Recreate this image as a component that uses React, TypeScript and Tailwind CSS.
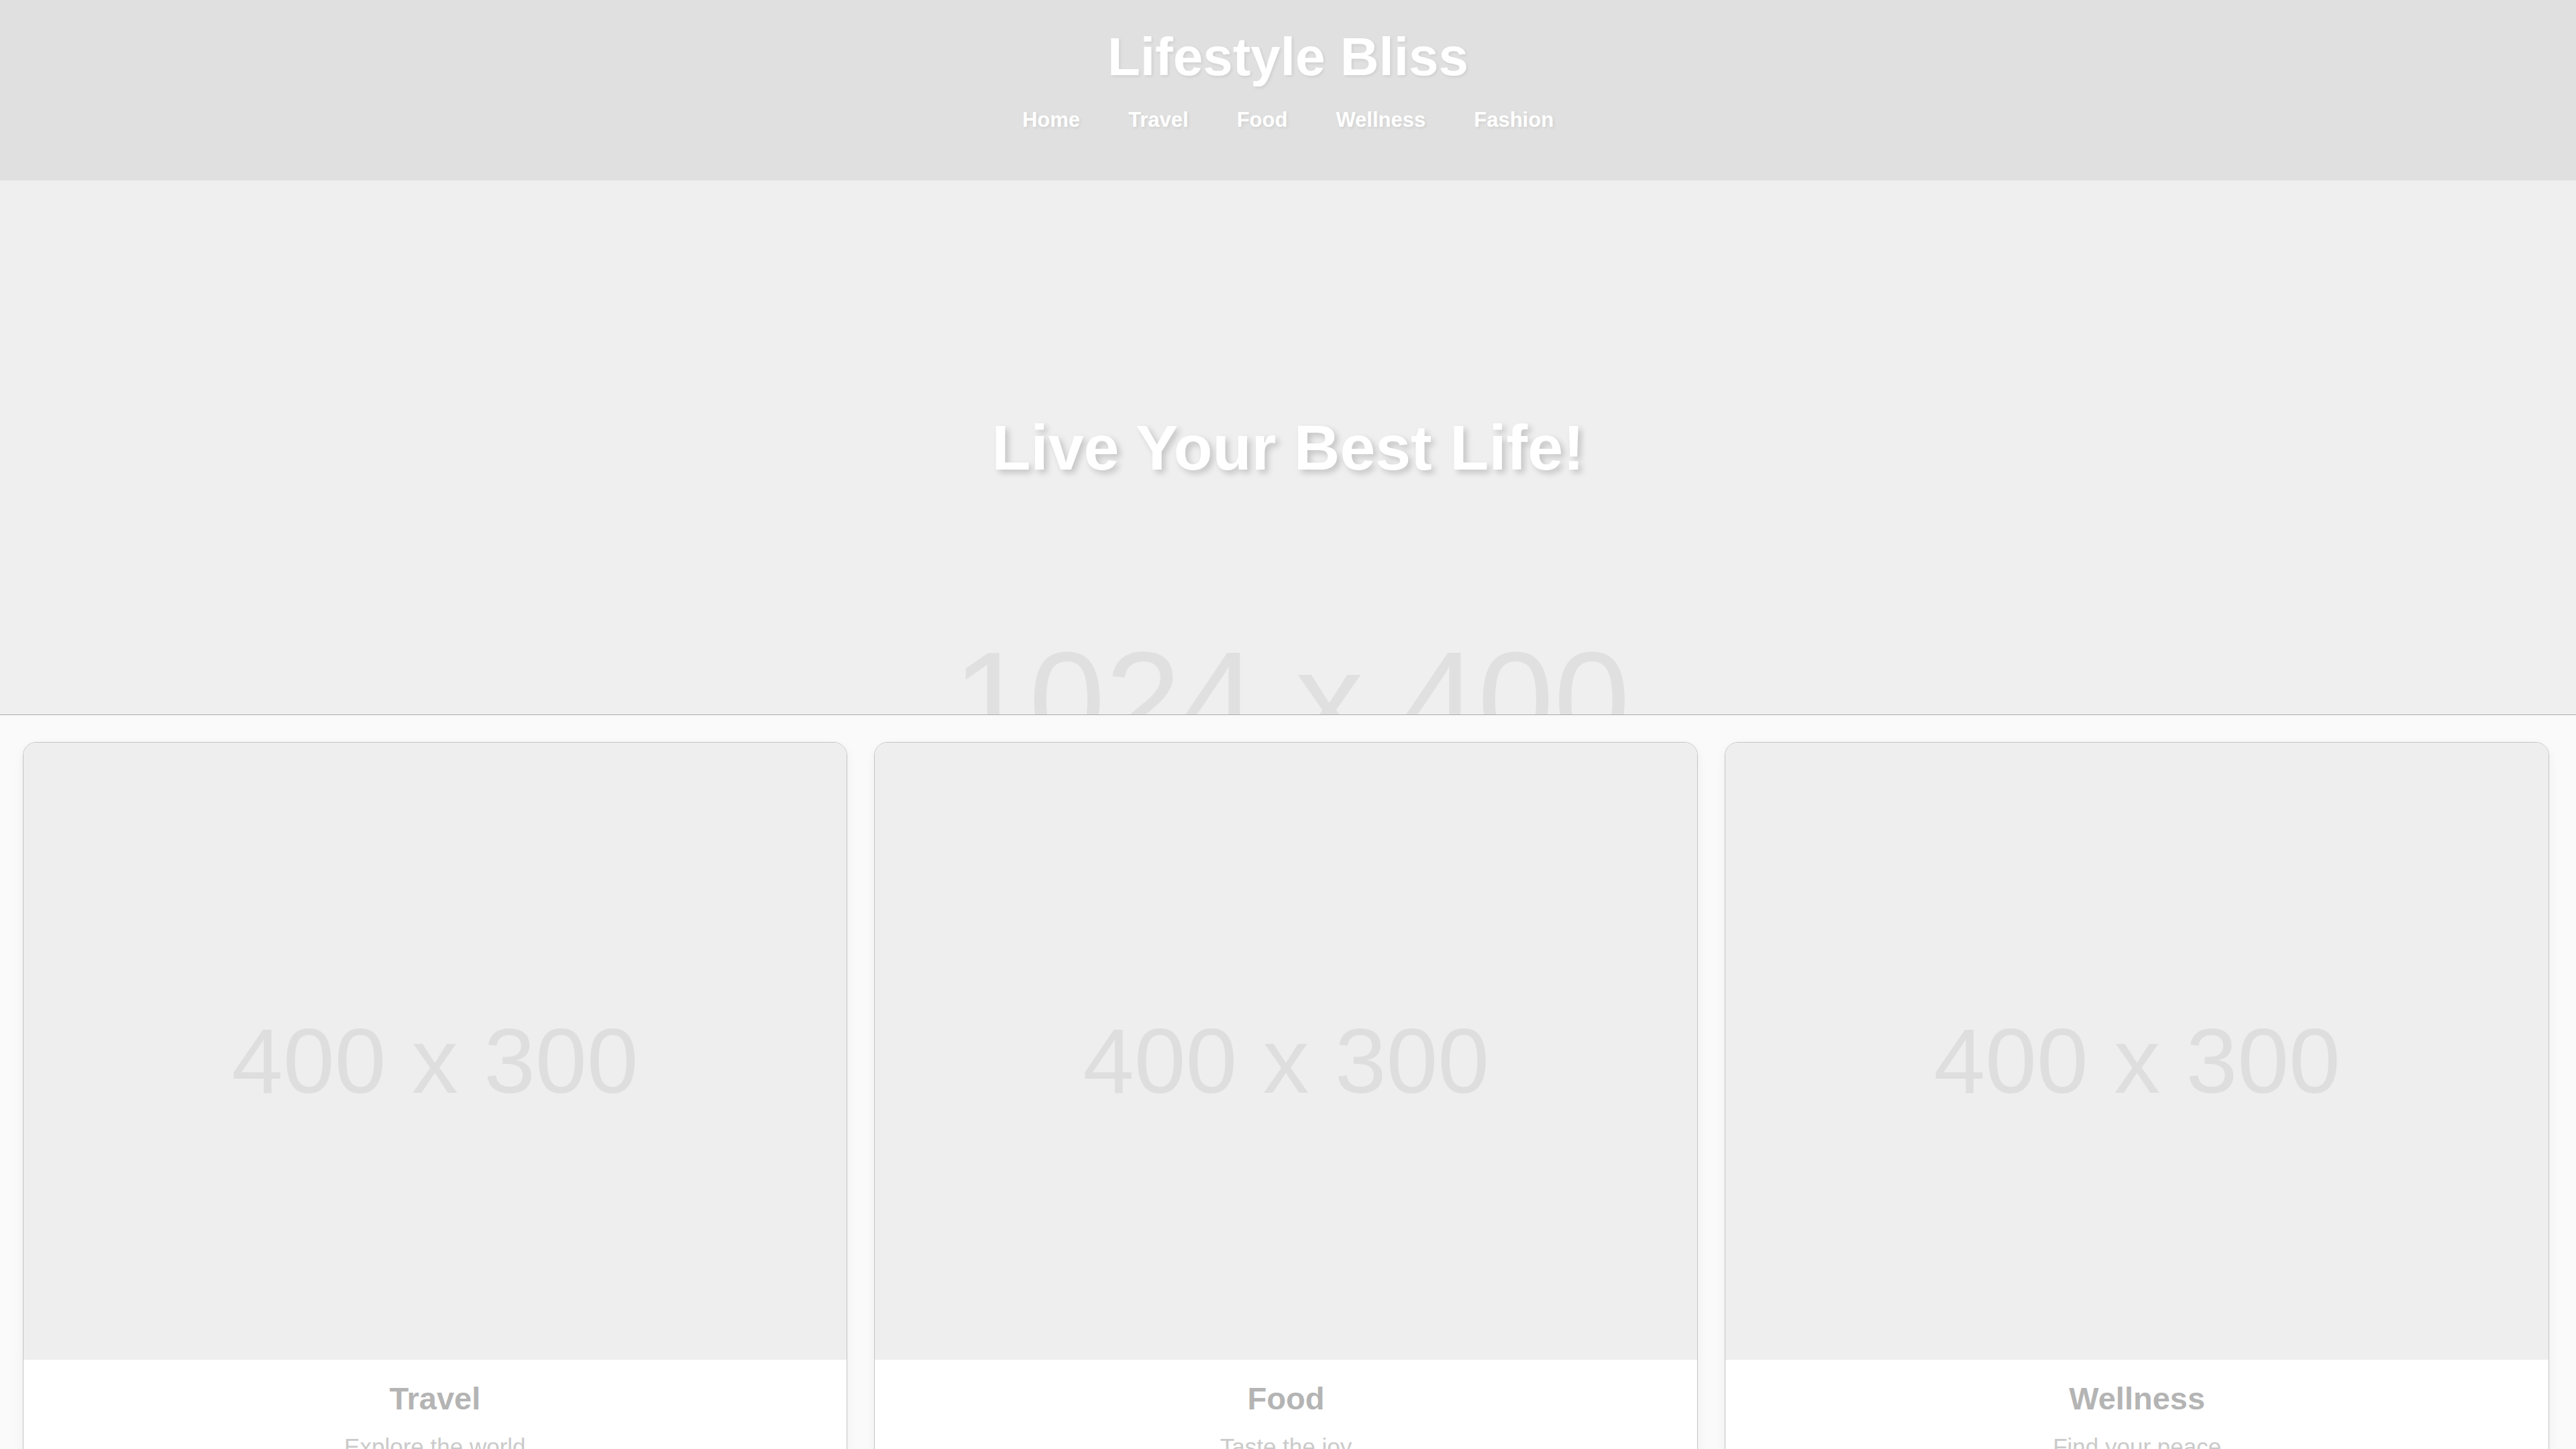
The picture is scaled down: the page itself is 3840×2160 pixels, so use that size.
import React from 'react';

const links = ['Home', 'Travel', 'Food', 'Wellness', 'Fashion'];

const cards = [
  { title: 'Travel', text: 'Explore the world' },
  { title: 'Food', text: 'Taste the joy' },
  { title: 'Wellness', text: 'Find your peace' },
];

export default function App() {
  return (
    <div className="min-h-screen bg-[#fafafa] font-['Liberation_Sans',Arial,sans-serif]">
      {/* header */}
      <header className="h-[269px] bg-[#e0e0e0] pt-[39px] text-center">
        <h1 className="text-[80px] leading-[92px] font-bold text-white [text-shadow:2px_2px_4px_rgba(0,0,0,0.08)]">
          Lifestyle Bliss
        </h1>
        <nav className="mt-[30px] flex justify-center gap-[72px]">
          {links.map((l) => (
            <a key={l} href="#" className="text-[31px] leading-[36px] font-bold text-white [text-shadow:2px_2px_4px_rgba(0,0,0,0.08)]">
              {l}
            </a>
          ))}
        </nav>
      </header>

      {/* hero */}
      <section className="relative flex h-[797px] items-center justify-center overflow-hidden border-b border-[#ababab] bg-[#efefef]">
        <div className="absolute inset-x-0 top-[672px] pl-[10px] text-center text-[204px] leading-none text-[#e0e0e0]">
          1024 x 400
        </div>
        <h2 className="relative text-[95px] font-bold text-white [text-shadow:5px_5px_10px_rgba(0,0,0,0.18)]">
          Live Your Best Life!
        </h2>
      </section>

      {/* categories */}
      <main className="grid grid-cols-3 gap-[40px] pt-[40px] pr-[40px] pb-[40px] pl-[34px]">
        {cards.map((c) => (
          <div key={c.title} className="overflow-hidden rounded-[20px] border border-[#c4c4c4] bg-white shadow-[0_5px_15px_rgba(0,0,0,0.05)]">
            <div className="flex aspect-[4/3] items-center justify-center bg-[#eeeeee] pt-[28px] text-[138px] leading-[158px] text-[#dedede]">
              400 x 300
            </div>
            <div className="px-[37px] pt-[31px] pb-[37px] text-center">
              <h3 className="text-[47px] leading-[54px] font-bold text-[#b4b4b4]">{c.title}</h3>
              <p className="mt-[25px] text-[35px] leading-[40px] text-[#cacaca]">{c.text}</p>
            </div>
          </div>
        ))}
      </main>
    </div>
  );
}
